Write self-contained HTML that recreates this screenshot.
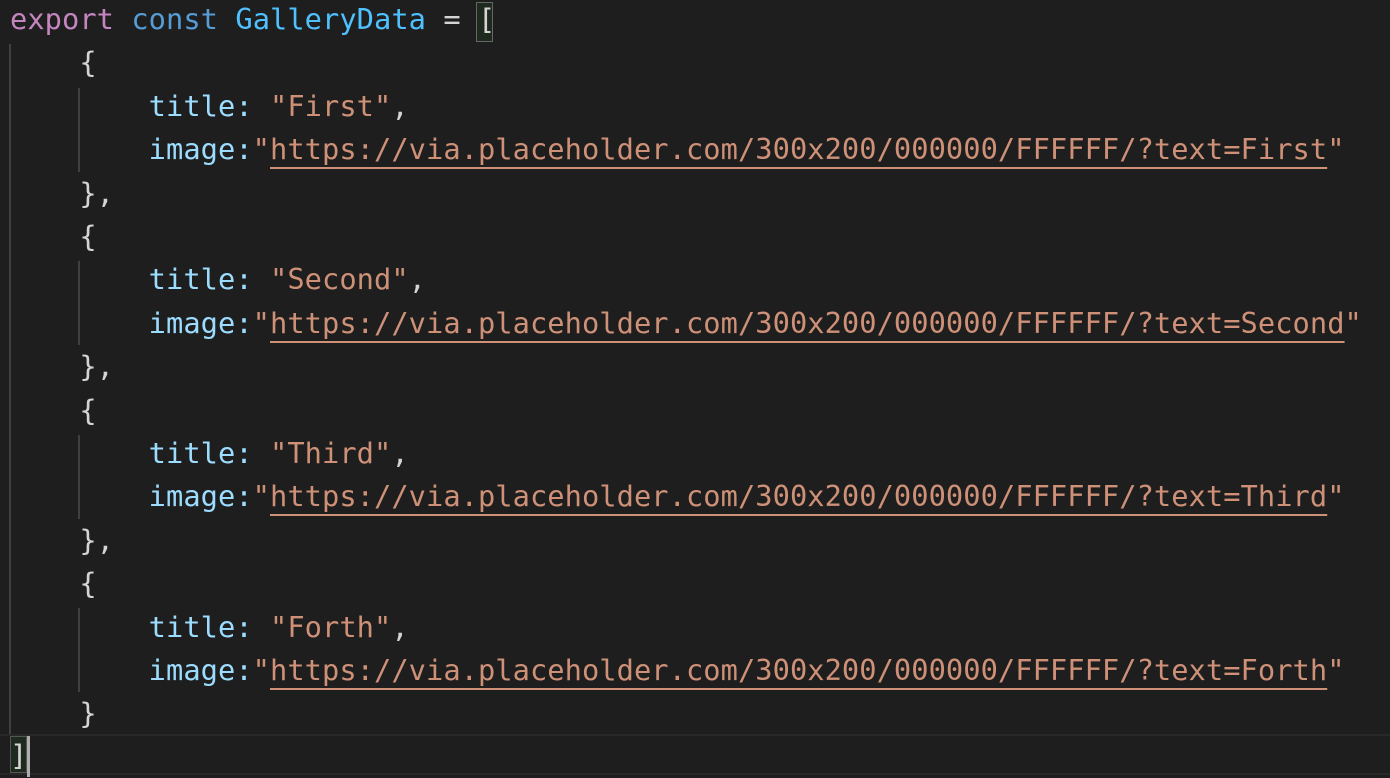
<!DOCTYPE html>
<html><head><meta charset="utf-8"><style>
html,body{margin:0;padding:0;background:#1e1e1e;width:1390px;height:778px;overflow:hidden;position:relative}
.l{position:absolute;left:10px;height:43px;line-height:43px;font-family:"DejaVu Sans Mono","Liberation Mono",monospace;font-size:28.7px;letter-spacing:0.06px;white-space:pre;color:#d4d4d4}
.k{color:#c586c0}.c{color:#569cd6}.v{color:#4fc1ff}.p{color:#9cdcfe}.s{color:#ce9178}
.u{color:#ce9178;text-decoration:underline;text-decoration-thickness:2px;text-underline-offset:8px}
.g{position:absolute;width:2px;background:#404040}
</style></head><body>
<div class="g" style="left:9px;top:44px;height:690px"></div>
<div class="g" style="left:78px;top:88px;height:84px"></div>
<div class="g" style="left:78px;top:261px;height:84px"></div>
<div class="g" style="left:78px;top:435px;height:84px"></div>
<div class="g" style="left:78px;top:608px;height:84px"></div>
<div style="position:absolute;left:0;top:734px;width:1390px;height:41px;border-top:2px solid #282828;border-bottom:2px solid #282828;box-sizing:border-box"></div>
<div style="position:absolute;left:10px;top:736px;width:17px;height:37px;background:#1f2a1f;border:1px solid #555;box-sizing:border-box"></div>
<div style="position:absolute;left:27px;top:736px;width:3px;height:41px;background:#aeafad"></div>
<div style="position:absolute;left:476px;top:2px;width:17px;height:40px;background:#1f2a1f;border:1px solid #666;box-sizing:border-box"></div>
<div class="l" style="top:-2px"><span class="k">export</span> <span class="c">const</span> <span class="v">GalleryData</span> = [</div>
<div class="l" style="top:41px">    {</div>
<div class="l" style="top:85px">        <span class="p">title:</span> <span class="s">"First"</span>,</div>
<div class="l" style="top:128px">        <span class="p">image:</span><span class="s">"</span><span class="u">https://via.placeholder.com/300x200/000000/FFFFFF/?text=First</span><span class="s">"</span></div>
<div class="l" style="top:172px">    },</div>
<div class="l" style="top:215px">    {</div>
<div class="l" style="top:258px">        <span class="p">title:</span> <span class="s">"Second"</span>,</div>
<div class="l" style="top:302px">        <span class="p">image:</span><span class="s">"</span><span class="u">https://via.placeholder.com/300x200/000000/FFFFFF/?text=Second</span><span class="s">"</span></div>
<div class="l" style="top:345px">    },</div>
<div class="l" style="top:389px">    {</div>
<div class="l" style="top:432px">        <span class="p">title:</span> <span class="s">"Third"</span>,</div>
<div class="l" style="top:475px">        <span class="p">image:</span><span class="s">"</span><span class="u">https://via.placeholder.com/300x200/000000/FFFFFF/?text=Third</span><span class="s">"</span></div>
<div class="l" style="top:519px">    },</div>
<div class="l" style="top:562px">    {</div>
<div class="l" style="top:606px">        <span class="p">title:</span> <span class="s">"Forth"</span>,</div>
<div class="l" style="top:649px">        <span class="p">image:</span><span class="s">"</span><span class="u">https://via.placeholder.com/300x200/000000/FFFFFF/?text=Forth</span><span class="s">"</span></div>
<div class="l" style="top:692px">    }</div>
<div class="l" style="top:734px">]</div>
</body></html>
